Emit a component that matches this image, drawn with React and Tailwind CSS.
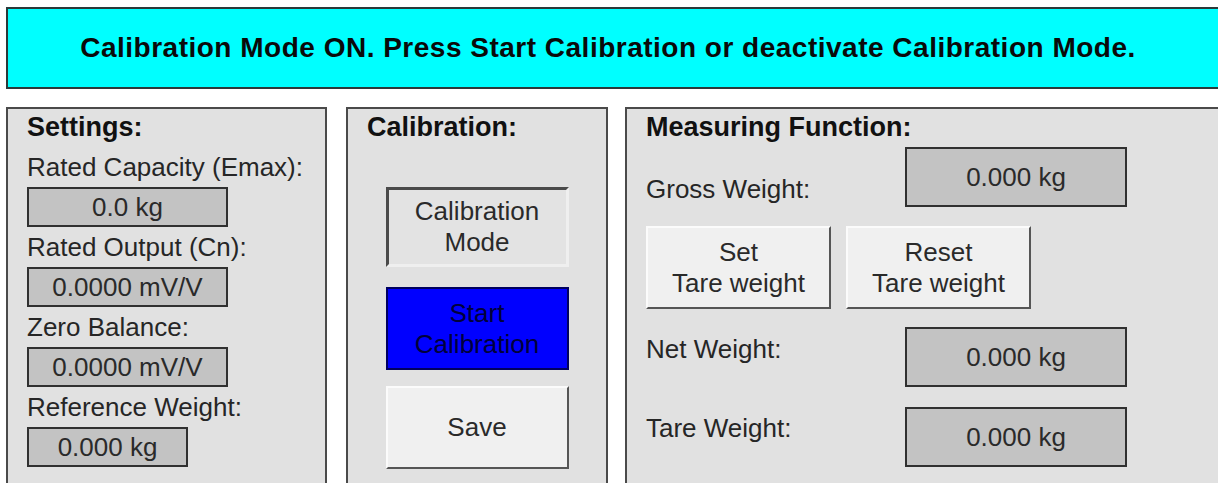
const ValueBox = ({ value, width = 'w-[201px]', height = 'h-[40px]' }) => (
  <div className={`${width} ${height} shrink-0 border-2 border-[#303030] bg-[#c3c3c3] flex items-center justify-center text-[26px] leading-[30px] text-[#2a2a2a]`}>
    {value}
  </div>
);

const Label = ({ children, className = '' }) => (
  <div className={`text-[26px] leading-[30px] text-[#262626] whitespace-nowrap ${className}`}>{children}</div>
);

const Heading = ({ children }) => (
  <div className="text-[27px] leading-[30px] font-bold text-[#111] whitespace-nowrap">{children}</div>
);

const RaisedButton = ({ lines, className = '' }) => (
  <button
    type="button"
    className={`flex flex-col items-center justify-center bg-[#f0f0f0] border-2 border-t-[#fbfbfb] border-l-[#fbfbfb] border-r-[#555] border-b-[#555] text-[26px] leading-[31px] text-[#2a2a2a] ${className}`}
  >
    {lines.map((l) => (
      <span key={l}>{l}</span>
    ))}
  </button>
);

const App = () => {
  return (
    <div className="w-[1218px] h-[483px] overflow-hidden bg-white font-['Liberation_Sans',Arial,sans-serif]">
      {/* status banner */}
      <div className="mt-[7px] ml-[6px] w-[1218px] h-[82px] border-2 border-[#2a3a3a] bg-[#00ffff] flex items-center justify-center pr-[14px]">
        <span className="text-[28px] font-bold tracking-[0.5px] text-[#0a0a0a] whitespace-nowrap">
          Calibration Mode ON. Press Start Calibration or deactivate Calibration Mode.
        </span>
      </div>

      <div className="mt-[18px] flex items-start">
        {/* Settings */}
        <div className="ml-[6px] w-[321px] h-[400px] shrink-0 border-2 border-[#4a4a4a] bg-[#e1e1e1] pt-[3px] pl-[19px]">
          <Heading>Settings:</Heading>
          <Label className="mt-[10px]">Rated Capacity (Emax):</Label>
          <div className="mt-[5px]"><ValueBox value="0.0 kg" /></div>
          <Label className="mt-[5px]">Rated Output (Cn):</Label>
          <div className="mt-[5px]"><ValueBox value="0.0000 mV/V" /></div>
          <Label className="mt-[5px]">Zero Balance:</Label>
          <div className="mt-[5px]"><ValueBox value="0.0000 mV/V" /></div>
          <Label className="mt-[5px]">Reference Weight:</Label>
          <div className="mt-[5px]"><ValueBox value="0.000 kg" width="w-[161px]" /></div>
        </div>

        {/* Calibration */}
        <div className="ml-[19px] w-[262px] h-[400px] shrink-0 border-2 border-[#4a4a4a] bg-[#e1e1e1] pt-[3px] pl-[19px] flex flex-col">
          <Heading>Calibration:</Heading>
          <div className="-ml-[19px] flex flex-col items-center">
            <button
              type="button"
              className="mt-[45px] w-[183px] h-[80px] flex flex-col items-center justify-center bg-[#e3e3e3] border-[3px] border-t-[#4a4a4a] border-l-[#4a4a4a] border-r-[#efefef] border-b-[#efefef] text-[26px] leading-[31px] text-[#2a2a2a]"
            >
              <span>Calibration</span>
              <span>Mode</span>
            </button>
            <button
              type="button"
              className="mt-[20px] w-[183px] h-[83px] flex flex-col items-center justify-center bg-[#0000ff] border-2 border-[#000060] text-[26px] leading-[31px] text-[#00003a]"
            >
              <span>Start</span>
              <span>Calibration</span>
            </button>
            <RaisedButton lines={['Save']} className="mt-[16px] w-[183px] h-[83px]" />
          </div>
        </div>

        {/* Measuring Function */}
        <div className="ml-[17px] w-[620px] h-[400px] shrink-0 border-2 border-[#4a4a4a] bg-[#e1e1e1] pt-[3px] pl-[19px]">
          <Heading>Measuring Function:</Heading>

          <div className="mt-[5px] flex items-start">
            <Label className="w-[259px] shrink-0 mt-[27px]">Gross Weight:</Label>
            <ValueBox value="0.000 kg" width="w-[222px]" height="h-[60px]" />
          </div>

          <div className="mt-[19px] flex gap-[15px]">
            <RaisedButton lines={['Set', 'Tare weight']} className="w-[185px] h-[83px]" />
            <RaisedButton lines={['Reset', 'Tare weight']} className="w-[185px] h-[83px]" />
          </div>

          <div className="mt-[18px] flex items-start">
            <Label className="w-[259px] shrink-0 mt-[7px]">Net Weight:</Label>
            <ValueBox value="0.000 kg" width="w-[222px]" height="h-[60px]" />
          </div>

          <div className="mt-[20px] flex items-start">
            <Label className="w-[259px] shrink-0 mt-[6px]">Tare Weight:</Label>
            <ValueBox value="0.000 kg" width="w-[222px]" height="h-[60px]" />
          </div>
        </div>
      </div>
    </div>
  );
};

export default App;
